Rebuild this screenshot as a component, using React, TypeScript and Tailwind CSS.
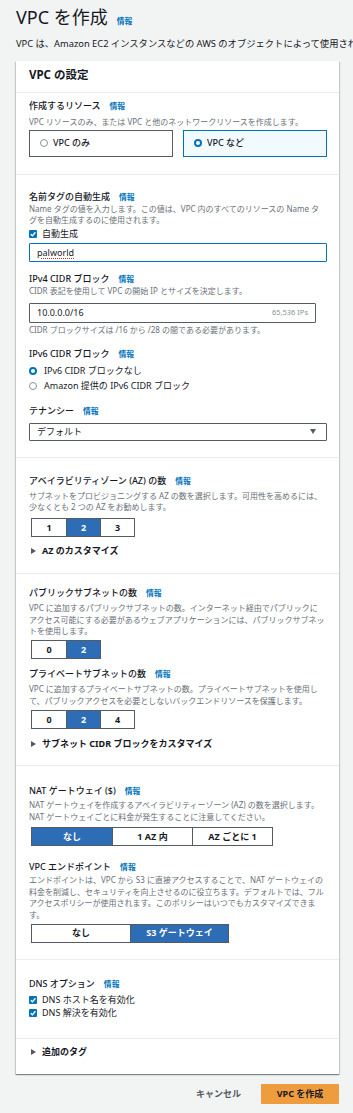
import React from "react";

function Info({ className = "" }: { className?: string }) {
  return <span className={`ml-[9px] text-[7.8px] font-bold text-[#0073bb] ${className}`}>情報</span>;
}

function Label({ children, className = "" }: { children: React.ReactNode; className?: string }) {
  return (
    <div className={`flex items-baseline text-[9px] leading-[12px] font-medium text-[#16191f] ${className}`}>
      <span>{children}</span>
      <Info />
    </div>
  );
}

function Desc({ children, className = "" }: { children: React.ReactNode; className?: string }) {
  return <p className={`text-[8px] leading-[11.7px] text-[#687078] ${className}`}>{children}</p>;
}

function Radio({ on }: { on?: boolean }) {
  return on ? (
    <span className="h-[8px] w-[8px] shrink-0 rounded-full border-[2.5px] border-[#0073bb] bg-white" />
  ) : (
    <span className="h-[8px] w-[8px] shrink-0 rounded-full border border-[#879596] bg-white" />
  );
}

function Check() {
  return (
    <span className="flex h-[8px] w-[8px] shrink-0 items-center justify-center rounded-[1px] bg-[#0073bb]">
      <svg viewBox="0 0 10 10" className="h-[8px] w-[8px]">
        <path d="M2.2 5.2 L4.3 7.3 L8 2.8" stroke="white" strokeWidth="1.7" fill="none" />
      </svg>
    </span>
  );
}

function Expander({ children, className = "" }: { children: React.ReactNode; className?: string }) {
  return (
    <div className={`flex items-center text-[9px] leading-[12px] font-bold text-[#16191f] ${className}`}>
      <svg viewBox="0 0 5 6" className="ml-[2px] h-[6px] w-[5px]">
        <path d="M0 0 L5 3 L0 6 Z" fill="#545b64" />
      </svg>
      <span className="ml-[6px]">{children}</span>
    </div>
  );
}

type Seg = { label: string; on?: boolean };

function Segments({ items, w, className = "" }: { items: Seg[]; w: string; className?: string }) {
  return (
    <div className={`ml-[2px] flex h-[19px] w-fit border border-[#545b64] ${className}`}>
      {items.map((it, i) => (
        <div
          key={it.label}
          className={`flex items-center justify-center text-[9px] font-bold ${w} ${i > 0 ? "border-l border-[#545b64]" : ""} ${
            it.on ? "bg-[#2d6db5] text-white" : "bg-white text-[#16191f]"
          }`}
        >
          {it.label}
        </div>
      ))}
    </div>
  );
}

export default function App() {
  return (
    <div className="min-h-[1113px] w-full overflow-hidden bg-[#f2f3f3] pl-[16px] pr-[14px] pt-[5px] pb-[10px] font-['Noto_Sans','Noto_Sans_CJK_JP',sans-serif] text-[#16191f]">
      <div className="flex items-baseline">
        <h1 className="text-[18px] leading-[24px] font-normal">VPC を作成</h1>
        <Info />
      </div>
      <p className="mt-[9px] whitespace-nowrap text-[9.3px] leading-[12px] text-[#16191f]">
        VPC は、Amazon EC2 インスタンスなどの AWS のオブジェクトによって使用される、分離された仮想ネットワークです。
      </p>

      <div className="mt-[11px] bg-white shadow-[0_1px_1px_0_rgba(0,28,36,0.3),1px_1px_1px_0_rgba(0,28,36,0.15),-1px_1px_1px_0_rgba(0,28,36,0.15)]">
        <div className="border-b border-[#eaeded] pl-[13px] pr-[12px] pt-[7px] pb-[10px]">
          <h2 className="text-[11.5px] leading-[14px] font-bold">VPC の設定</h2>
        </div>

        {/* resources */}
        <div className="border-b border-[#eaeded] pl-[13px] pr-[12px] pt-[7px] pb-[17px]">
          <Label>作成するリソース</Label>
          <Desc className="mt-[4px]">VPC リソースのみ、または VPC と他のネットワークリソースを作成します。</Desc>
          <div className="mt-[2px] grid grid-cols-2 gap-[10px]">
            <div className="flex h-[27px] items-center gap-[5px] border border-[#545b64] px-[10px] text-[9px] font-medium">
              <Radio />
              <span>VPC のみ</span>
            </div>
            <div className="flex h-[27px] items-center gap-[5px] border border-[#0073bb] bg-[#f1faff] px-[10px] text-[9px] font-medium">
              <Radio on />
              <span>VPC など</span>
            </div>
          </div>
        </div>

        {/* name tag, cidr, tenancy */}
        <div className="border-b border-[#eaeded] pl-[13px] pr-[12px] pt-[16px] pb-[16px]">
          <Label>名前タグの自動生成</Label>
          <Desc>Name タグの値を入力します。この値は、VPC 内のすべてのリソースの Name タグを自動生成するのに使用されます。</Desc>
          <div className="mt-[2px] flex items-center gap-[5px] text-[9px] leading-[12px]">
            <Check />
            <span>自動生成</span>
          </div>
          <div className="mt-[3px] flex h-[19px] items-center rounded-[1px] border-[1.5px] border-[#0073bb] px-[7px] text-[9px]">
            <span className="underline decoration-dotted decoration-[#d13212] underline-offset-2">palworld</span>
          </div>

          <Label className="mt-[11px]">IPv4 CIDR ブロック</Label>
          <Desc>CIDR 表記を使用して VPC の開始 IP とサイズを決定します。</Desc>
          <div className="mt-[6px] mr-[11px] flex h-[20px] items-center justify-between rounded-[1px] border border-[#545b64] px-[7px]">
            <span className="text-[9px]">10.0.0.0/16</span>
            <span className="text-[7.5px] text-[#879596]">65,536 IPs</span>
          </div>
          <Desc className="mt-[1px]">CIDR ブロックサイズは /16 から /28 の間である必要があります。</Desc>

          <Label className="mt-[12px]">IPv6 CIDR ブロック</Label>
          <div className="mt-[5px] flex items-center gap-[7px] text-[9px] leading-[12px]">
            <Radio on />
            <span>IPv6 CIDR ブロックなし</span>
          </div>
          <div className="mt-[3px] flex items-center gap-[7px] text-[9px] leading-[12px]">
            <Radio />
            <span>Amazon 提供の IPv6 CIDR ブロック</span>
          </div>

          <Label className="mt-[13px]">テナンシー</Label>
          <div className="mt-[6px] flex h-[18px] items-center justify-between rounded-[1px] border border-[#545b64] pl-[7px] pr-[10px] text-[9px]">
            <span>デフォルト</span>
            <svg viewBox="0 0 6 5" className="h-[5px] w-[6px]">
              <path d="M0 0 L6 0 L3 5 Z" fill="#545b64" />
            </svg>
          </div>
        </div>

        {/* AZ */}
        <div className="border-b border-[#eaeded] pl-[13px] pr-[12px] pt-[17px] pb-[16px]">
          <Label>アベイラビリティゾーン (AZ) の数</Label>
          <Desc className="mt-[3px]">サブネットをプロビジョニングする AZ の数を選択します。可用性を高めるには、少なくとも 2 つの AZ をお勧めします。</Desc>
          <Segments className="mt-[5px]" w="w-[34px]" items={[{ label: "1" }, { label: "2", on: true }, { label: "3" }]} />
          <Expander className="mt-[8px]">AZ のカスタマイズ</Expander>
        </div>

        {/* subnets */}
        <div className="border-b border-[#eaeded] pl-[13px] pr-[12px] pt-[13px] pb-[15px]">
          <Label>パブリックサブネットの数</Label>
          <Desc className="mt-[3px]">
            VPC に追加するパブリックサブネットの数。インターネット経由でパブリックに
            <br />
            アクセス可能にする必要があるウェブアプリケーションには、パブリックサブネットを使用します。
          </Desc>
          <Segments className="mt-[3px]" w="w-[34px]" items={[{ label: "0" }, { label: "2", on: true }]} />
          <Label className="mt-[9px]">プライベートサブネットの数</Label>
          <Desc className="mt-[3px]">VPC に追加するプライベートサブネットの数。プライベートサブネットを使用して、パブリックアクセスを必要としないバックエンドリソースを保護します。</Desc>
          <Segments className="mt-[4px]" w="w-[34px]" items={[{ label: "0" }, { label: "2", on: true }, { label: "4" }]} />
          <Expander className="mt-[9px]">サブネット CIDR ブロックをカスタマイズ</Expander>
        </div>

        {/* NAT & endpoints */}
        <div className="border-b border-[#eaeded] pl-[13px] pr-[12px] pt-[19px] pb-[16px]">
          <Label>NAT ゲートウェイ ($)</Label>
          <Desc className="mt-[2px]">NAT ゲートウェイを作成するアベイラビリティーゾーン (AZ) の数を選択します。NAT ゲートウェイごとに料金が発生することに注意してください。</Desc>
          <Segments className="mt-[4px]" w="w-[80px]" items={[{ label: "なし", on: true }, { label: "1 AZ 内" }, { label: "AZ ごとに 1" }]} />
          <Label className="mt-[15px]">VPC エンドポイント</Label>
          <Desc className="mt-[1px]">エンドポイントは、VPC から S3 に直接アクセスすることで、NAT ゲートウェイの料金を削減し、セキュリティを向上させるのに役立ちます。デフォルトでは、フルアクセスポリシーが使用されます。このポリシーはいつでもカスタマイズできます。</Desc>
          <Segments className="mt-[3px]" w="w-[98px]" items={[{ label: "なし" }, { label: "S3 ゲートウェイ", on: true }]} />
        </div>

        {/* DNS */}
        <div className="border-b border-[#eaeded] pl-[13px] pr-[12px] pt-[18px] pb-[19px]">
          <Label>DNS オプション</Label>
          <div className="mt-[4px] flex items-center gap-[5px] text-[9px] leading-[12px]">
            <Check />
            <span>DNS ホスト名を有効化</span>
          </div>
          <div className="mt-[1px] flex items-center gap-[5px] text-[9px] leading-[12px]">
            <Check />
            <span>DNS 解決を有効化</span>
          </div>
        </div>

        <div className="pl-[13px] pr-[12px] pt-[7px] pb-[16px]">
          <Expander>追加のタグ</Expander>
        </div>
      </div>

      <div className="mt-[10px] flex items-center justify-end gap-[20px]">
        <span className="text-[9px] font-bold text-[#545b64]">キャンセル</span>
        <div className="flex h-[20px] w-[78px] items-center justify-center rounded-[1px] bg-[#ee9c3e] text-[9px] font-bold text-[#16191f]">
          VPC を作成
        </div>
      </div>
    </div>
  );
}
